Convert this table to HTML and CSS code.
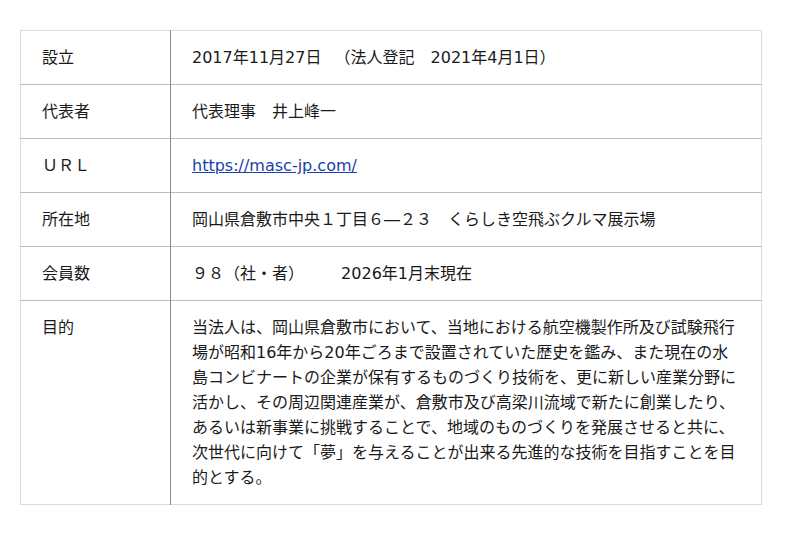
FILE: index.html
```html
<!DOCTYPE html>
<html lang="ja">
<head>
<meta charset="utf-8">
<link rel="stylesheet" href="styles.css">
</head>
<body>
<div class="page">
<table class="info">
<tr><th>設立</th><td>2017年11月27日 　（法人登記　2021年4月1日）</td></tr>
<tr><th>代表者</th><td>代表理事　井上峰一</td></tr>
<tr><th>ＵＲＬ</th><td><a href="#">https://masc-jp.com/</a></td></tr>
<tr><th>所在地</th><td>岡山県倉敷市中央１丁目６―２３　くらしき空飛ぶクルマ展示場</td></tr>
<tr><th>会員数</th><td>９８（社・者） 　　2026年1月末現在</td></tr>
<tr><th>目的</th><td>当法人は、岡山県倉敷市において、当地における航空機製作所及び試験飛行場が昭和16年から20年ごろまで設置されていた歴史を鑑み、また現在の水島コンビナートの企業が保有するものづくり技術を、更に新しい産業分野に活かし、その周辺関連産業が、倉敷市及び高梁川流域で新たに創業したり、あるいは新事業に挑戦することで、地域のものづくりを発展させると共に、次世代に向けて「夢」を与えることが出来る先進的な技術を目指すことを目的とする。</td></tr>
</table>
</div>
</body>
</html>
```
FILE: styles.css
```css
html, body { margin: 0; padding: 0; background: #fff; }
.page { padding: 30px 0 0 20px; }
.info {
  border-collapse: collapse;
  width: 742px;
  font-family: "DejaVu Sans", "Noto Sans CJK JP", sans-serif;
  font-size: 16px;
  color: #1a1a1a;
  border: 1px solid #dcdcdc;
}
.info th, .info td {
  text-align: left;
  vertical-align: top;
  font-weight: normal;
  line-height: 25px;
  padding: 14px 21px;
  border-top: 1px solid #bdbdbd;
}
.info tr:first-child th, .info tr:first-child td { border-top: 1px solid #dcdcdc; }
.info th { width: 107px; border-right: 1px solid #8c8c8c; }
.info td { line-break: strict; }
.info a { color: #1a3faa; text-decoration: underline; }
```
